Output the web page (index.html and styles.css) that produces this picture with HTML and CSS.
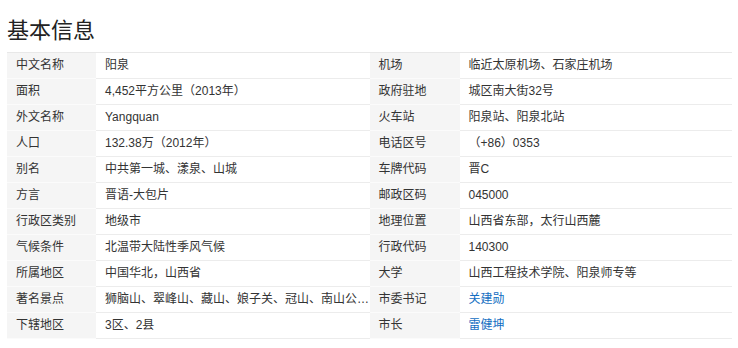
FILE: index.html
```html
<!DOCTYPE html>
<html lang="zh">
<head>
<meta charset="utf-8">
<title>基本信息</title>
<link rel="stylesheet" href="styles.css">
</head>
<body>
<div class="page">
  <h2 class="title">基本信息</h2>
  <div class="info">
    <dl class="col">
      <dt>中文名称</dt><dd>阳泉</dd>
      <dt>面积</dt><dd>4,452平方公里（2013年）</dd>
      <dt>外文名称</dt><dd>Yangquan</dd>
      <dt>人口</dt><dd>132.38万（2012年）</dd>
      <dt>别名</dt><dd>中共第一城、漾泉、山城</dd>
      <dt>方言</dt><dd>晋语-大包片</dd>
      <dt>行政区类别</dt><dd>地级市</dd>
      <dt>气候条件</dt><dd>北温带大陆性季风气候</dd>
      <dt>所属地区</dt><dd>中国华北，山西省</dd>
      <dt>著名景点</dt><dd>狮脑山、翠峰山、藏山、娘子关、冠山、南山公…</dd>
      <dt>下辖地区</dt><dd>3区、2县</dd>
    </dl>
    <dl class="col">
      <dt>机场</dt><dd>临近太原机场、石家庄机场</dd>
      <dt>政府驻地</dt><dd>城区南大街32号</dd>
      <dt>火车站</dt><dd>阳泉站、阳泉北站</dd>
      <dt>电话区号</dt><dd>（+86）0353</dd>
      <dt>车牌代码</dt><dd>晋C</dd>
      <dt>邮政区码</dt><dd>045000</dd>
      <dt>地理位置</dt><dd>山西省东部，太行山西麓</dd>
      <dt>行政代码</dt><dd>140300</dd>
      <dt>大学</dt><dd>山西工程技术学院、阳泉师专等</dd>
      <dt>市委书记</dt><dd><a class="link" href="#">关建勋</a></dd>
      <dt>市长</dt><dd><a class="link" href="#">雷健坤</a></dd>
    </dl>
  </div>
</div>
</body>
</html>
```

FILE: styles.css
```css
html, body {
  margin: 0;
  padding: 0;
  background: #fff;
}
body {
  font-family: "Liberation Sans", "Noto Sans CJK SC", sans-serif;
  color: #333;
}
.page {
  padding: 0 6px 0 7px;
}
.title {
  margin: 0;
  padding-top: 16px;
  font-size: 22px;
  line-height: 30px;
  font-weight: normal;
  color: #222;
  height: 36px;
}
.info {
  display: flex;
  border-top: 1px solid #e8e8e8;
}
.col {
  margin: 0;
  display: grid;
  grid-template-columns: 89px 1fr;
  flex: 1 1 0;
  min-width: 0;
}
.col + .col {
  grid-template-columns: 90px 1fr;
}
.col dt,
.col dd {
  margin: 0;
  font-size: 12px;
  line-height: 25px;
  height: 25px;
  padding-left: 9px;
  white-space: nowrap;
  overflow: hidden;
}
.col dt {
  background: #f5f5f5;
  border-bottom: 1px solid #fbfbfb;
}
.col dd {
  background: #fff;
  border-bottom: 1px solid #ececec;
}
.link {
  color: #136ec2;
  text-decoration: none;
}
```
